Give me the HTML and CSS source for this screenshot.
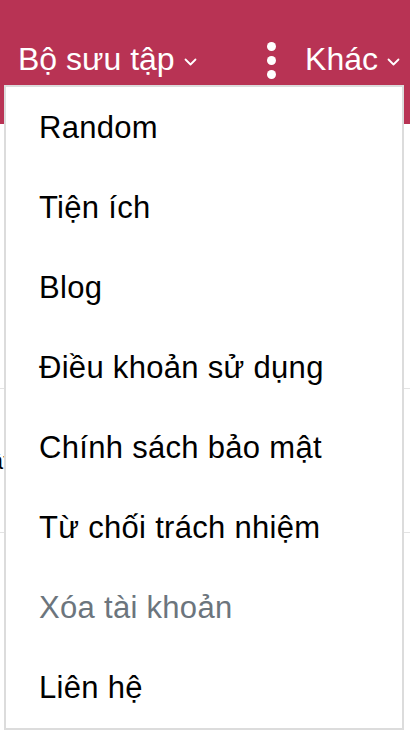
FILE: index.html
```html
<!DOCTYPE html>
<html lang="vi">
<head>
    <meta charset="UTF-8">
    <meta name="viewport" content="width=device-width, initial-scale=1.0">
    <title>Khác</title>
    <link rel="stylesheet" href="styles.css">
</head>
<body>
    <header class="topbar">
        <nav class="nav">
            <a class="nav-link" href="#">Bộ sưu tập
                <svg class="caret" width="13" height="8" viewBox="0 0 13 8"><polyline points="1.5,1.5 6.5,6.5 11.5,1.5"/></svg>
            </a>
            <div class="nav-right">
                <span class="dots"><i></i><i></i><i></i></span>
                <a class="nav-link" href="#">Khác
                    <svg class="caret" width="13" height="8" viewBox="0 0 13 8"><polyline points="1.5,1.5 6.5,6.5 11.5,1.5"/></svg>
                </a>
            </div>
        </nav>
    </header>

    <main class="content">
        <div class="row"></div>
        <div class="row"><span class="row-text">Mới cập nhật</span></div>
        <div class="row"></div>
    </main>

    <ul class="dropdown">
        <li><a href="#">Random</a></li>
        <li><a href="#">Tiện ích</a></li>
        <li><a href="#">Blog</a></li>
        <li><a href="#">Điều khoản sử dụng</a></li>
        <li><a href="#">Chính sách bảo mật</a></li>
        <li><a href="#">Từ chối trách nhiệm</a></li>
        <li><a class="disabled" href="#">Xóa tài khoản</a></li>
        <li><a href="#">Liên hệ</a></li>
    </ul>
</body>
</html>
```

FILE: styles.css
```css
body {
    margin: 0;
    font-family: 'Liberation Sans', Arial, sans-serif;
    background: #fff;
    color: #000;
}
a {
    text-decoration: none;
    color: inherit;
}

.topbar {
    background: #b83354;
    height: 124px;
    box-sizing: border-box;
    padding: 40px 10px 0 18px;
}
.nav {
    display: flex;
    justify-content: space-between;
    align-items: center;
}
.nav-link {
    color: #fff;
    font-size: 32px;
    display: flex;
    align-items: center;
    gap: 9px;
}
.caret {
    fill: none;
    stroke: #fff;
    stroke-width: 1.8;
    stroke-linecap: round;
    stroke-linejoin: round;
    margin-top: 4px;
}
.nav-right {
    display: flex;
    align-items: center;
    gap: 29px;
}
.dots {
    display: flex;
    flex-direction: column;
    gap: 5px;
    margin-top: 2px;
}
.dots i {
    width: 9px;
    height: 9px;
    border-radius: 50%;
    background: #fff;
}

/* page rows underneath the open menu */
.content {
    padding-top: 121px;
}
.row {
    height: 143px;
    border-bottom: 1px solid #e3e3e3;
    display: flex;
    align-items: center;
}
.row:last-child {
    border-bottom: none;
}
.row-text {
    font-size: 24px;
    margin-left: -130px;
}

.dropdown {
    position: absolute;
    top: 85px;
    left: 4px;
    width: 396px;
    margin: 0;
    padding: 1px 0 0;
    list-style: none;
    background: #fff;
    border: 2px solid #dcdcdc;
}
.dropdown a {
    display: block;
    height: 80px;
    line-height: 80px;
    padding-left: 33px;
    font-size: 31px;
    letter-spacing: 0.3px;
    color: #000;
}
.dropdown a.disabled {
    color: #6c757d;
}
```
